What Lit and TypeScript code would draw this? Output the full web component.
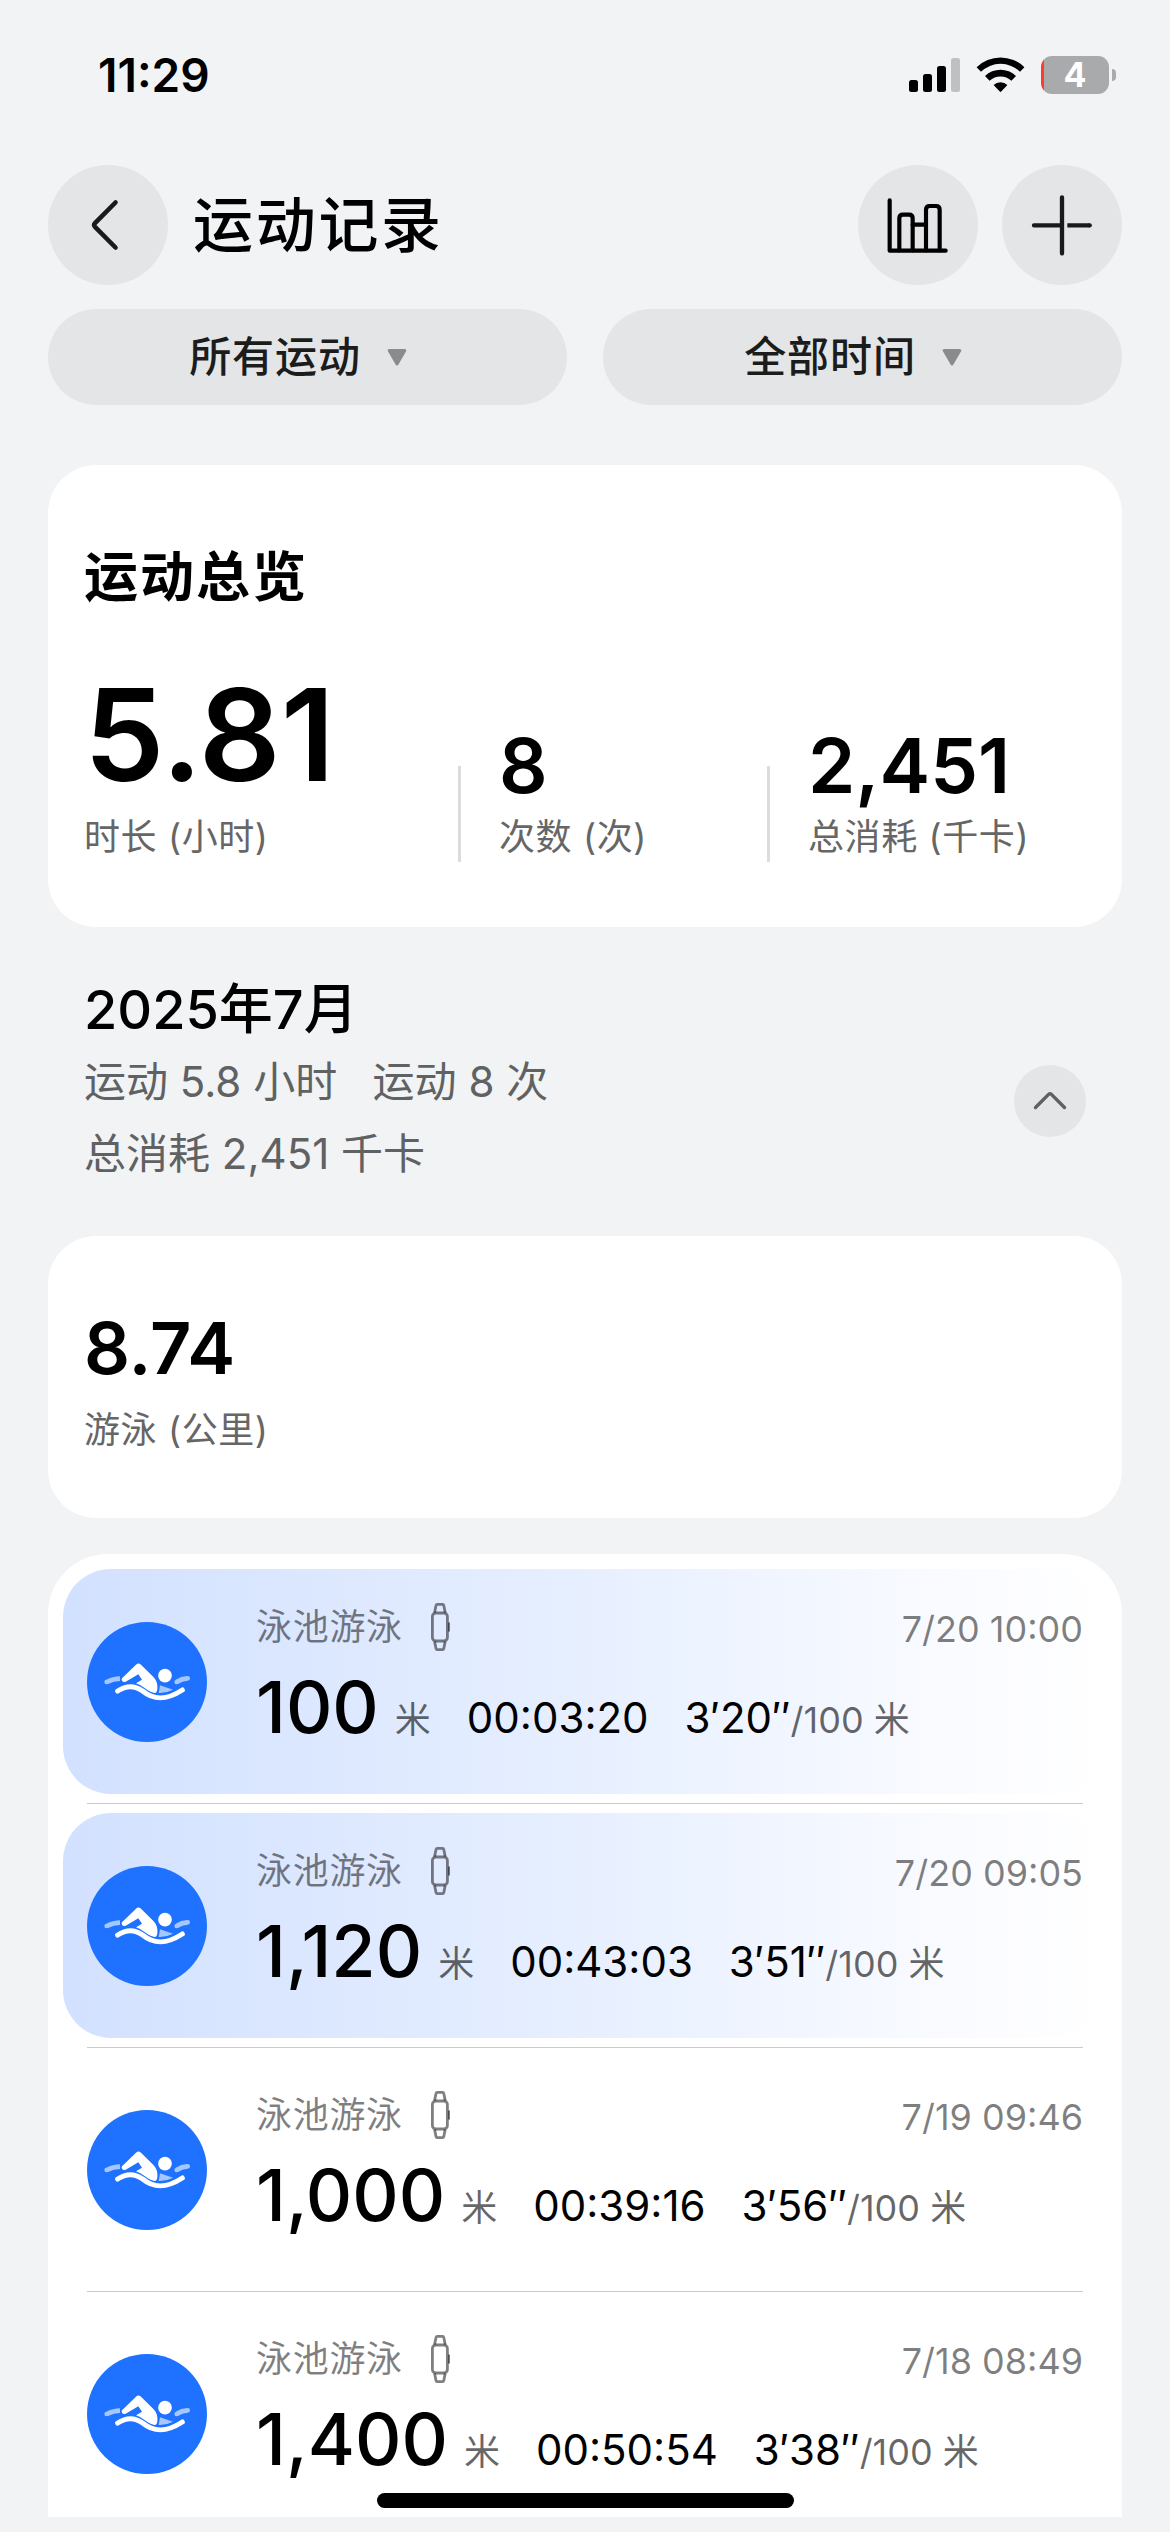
import { LitElement, html, css, svg } from "lit";
import { customElement, property } from "lit/decorators.js";

interface Workout {
  distance: string;
  duration: string;
  pace: string;
  date: string;
  highlighted: boolean;
}

const WORKOUTS: Workout[] = [
  { distance: "100", duration: "00:03:20", pace: "3′20″", date: "7/20 10:00", highlighted: true },
  { distance: "1,120", duration: "00:43:03", pace: "3′51″", date: "7/20 09:05", highlighted: true },
  { distance: "1,000", duration: "00:39:16", pace: "3′56″", date: "7/19 09:46", highlighted: false },
  { distance: "1,400", duration: "00:50:54", pace: "3′38″", date: "7/18 08:49", highlighted: false },
];

@customElement("status-bar")
class StatusBar extends LitElement {
  static styles = css`
    :host {
      display: flex;
      align-items: center;
      justify-content: space-between;
      height: 149px;
      padding: 0 54px 0 98px;
      box-sizing: border-box;
    }
    .time {
      font-size: 46px;
      font-weight: 600;
      line-height: 60px;
    }
    .icons {
      display: flex;
      align-items: center;
    }
    .signal {
      width: 52px;
      height: 36px;
      margin-right: 16px;
    }
    .wifi {
      width: 49px;
      height: 37px;
      margin-right: 16px;
    }
    .battery {
      display: flex;
      align-items: center;
      gap: 3px;
    }
    .cell {
      width: 68px;
      height: 38px;
      border-radius: 11px;
      background: linear-gradient(90deg, #ff3b30 3px, #a9aaac 3px);
      color: #fff;
      font-size: 34px;
      font-weight: 700;
      line-height: 38px;
      text-align: center;
    }
    .nub {
      width: 4px;
      height: 12px;
      border-radius: 0 4px 4px 0;
      background: #a9aaac;
    }
  `;
  render() {
    return html`
      <div class="time">11:29</div>
      <div class="icons">
        <svg class="signal" viewBox="0 0 52 36">
          <rect x="1" y="23" width="9" height="12" rx="2.5" />
          <rect x="15" y="17" width="9" height="18" rx="2.5" />
          <rect x="29" y="9" width="9" height="26" rx="2.5" />
          <rect x="43" y="1" width="9" height="34" rx="2.5" fill="#bfc0c2" />
        </svg>
        <svg class="wifi" viewBox="0 0 49 37">
          <path d="M0.6 11.2 A34 34 0 0 1 48.4 11.2 L44 15.8 A27.8 27.8 0 0 0 5 15.8 Z" />
          <path d="M9 20 A22.2 22.2 0 0 1 40 20 L35.4 24.8 A15.8 15.8 0 0 0 13.6 24.8 Z" />
          <path d="M17.6 28.9 A10 10 0 0 1 31.4 28.9 L25.2 35.6 Q24.5 36.3 23.8 35.6 Z" />
        </svg>
        <div class="battery">
          <div class="cell">4</div>
          <div class="nub"></div>
        </div>
      </div>
    `;
  }
}

@customElement("workout-row")
class WorkoutRow extends LitElement {
  @property({ attribute: false }) workout!: Workout;

  static styles = css`
    :host {
      display: block;
      padding: 9px 15px;
    }
    .panel {
      display: flex;
      align-items: center;
      height: 225px;
      padding: 0 24px;
      border-radius: 48px;
      box-sizing: border-box;
    }
    .lit {
      background: linear-gradient(90deg, #d2e1ff 0%, #e8f0ff 52%, #fbfcff 88%, #ffffff 100%);
    }
    .badge {
      flex: none;
      width: 120px;
      height: 120px;
      margin-right: 49px;
    }
    .info {
      flex: 1;
      display: flex;
      flex-direction: column;
      padding-bottom: 7px;
    }
    .top {
      display: flex;
      align-items: center;
      height: 50px;
      color: rgba(0, 0, 0, 0.5);
      font-size: 36px;
      line-height: 50px;
    }
    .kind {
      letter-spacing: 0.7px;
    }
    .watch {
      width: 22px;
      height: 50px;
      margin-left: 26px;
    }
    .date {
      flex: 1;
      text-align: right;
      padding-top: 4px;
    }
    .stats {
      display: flex;
      align-items: baseline;
      height: 96px;
      line-height: 96px;
      margin-top: 7px;
      white-space: nowrap;
    }
    .distance {
      font-size: 72px;
      font-weight: 500;
    }
    .unit {
      font-size: 36px;
      color: rgba(0, 0, 0, 0.6);
      margin-left: 16px;
    }
    .duration,
    .pace {
      font-size: 42px;
      margin-left: 36px;
    }
    .per {
      font-size: 36px;
      color: rgba(0, 0, 0, 0.6);
    }
  `;
  render() {
    const w = this.workout;
    return html`
      <div class="panel ${w.highlighted ? "lit" : ""}">
        <svg class="badge" viewBox="21 36 360 360">
          <circle cx="201" cy="216" r="180" fill="#1f72ff" />
          <g fill="none" stroke="#a5c7ff" stroke-width="14">
            <path d="M81 216 Q100 206 120 206" />
            <path d="M291 215 Q305 206 322 205" />
            <path d="M80 216 h.1 M290 216 h.1 M323 205 h.1" stroke-linecap="round" />
          </g>
          <path d="M240 226 L279 239 Q258 250 236 249 Z" fill="#a5c7ff" />
          <path
            fill="#fff"
            d="M126 205 L168 164 Q175 157 183 164 L221 202 Q234 216 232 238 Q231 249 224 249 Q213 247 197 236 Q183 225 168 220 L186 209 L175 193 L137 215 Q131 218 127 214 Q123 210 126 205 Z"
          />
          <circle cx="255" cy="197" r="20.5" fill="#fff" />
          <path
            d="M113 243 C140 225 163 225 188 243 C222 271 258 272 307 240"
            fill="none"
            stroke="#fff"
            stroke-width="15"
            stroke-linecap="round"
          />
        </svg>
        <div class="info">
          <div class="top">
            <span class="kind">泳池游泳</span>
            <svg class="watch" viewBox="0 0 22 50" fill="none" stroke="currentColor" stroke-width="2.8">
              <rect x="3.4" y="11" width="15" height="28" rx="3.5" />
              <path d="M5.6 10.6 L7 3.6 Q7.2 2.4 8.4 2.4 H13.4 Q14.6 2.4 14.8 3.6 L16.2 10.6" />
              <path d="M5.6 39.4 L7 46.4 Q7.2 47.6 8.4 47.6 H13.4 Q14.6 47.6 14.8 46.4 L16.2 39.4" />
              <path d="M20 20.5 V29.5" stroke-width="2" />
            </svg>
            <span class="date">${w.date}</span>
          </div>
          <div class="stats">
            <span class="distance">${w.distance}</span>
            <span class="unit">米</span>
            <span class="duration">${w.duration}</span>
            <span class="pace">${w.pace}</span>
            <span class="per">/100 米</span>
          </div>
        </div>
      </div>
    `;
  }
}

@customElement("app-root")
class AppRoot extends LitElement {
  static styles = css`
    :host {
      display: block;
      position: relative;
      width: 1170px;
      height: 2532px;
      overflow: hidden;
      background: #f1f3f5;
      color: #000;
      font-family: "Inter", "Noto Sans CJK SC", sans-serif;
    }
    .header {
      display: flex;
      align-items: center;
      height: 120px;
      margin-top: 16px;
      padding: 0 48px;
    }
    .round {
      width: 120px;
      height: 120px;
      border-radius: 60px;
      background: #e4e5e7;
    }
    .title {
      flex: 1;
      margin: 0 0 0 25px;
      font-size: 60px;
      font-weight: 500;
      line-height: 80px;
      letter-spacing: 2.7px;
    }
    .actions {
      display: flex;
      gap: 24px;
    }
    .filters {
      display: grid;
      grid-template-columns: 1fr 1fr;
      gap: 36px;
      padding: 24px 48px 60px;
    }
    .pill {
      display: flex;
      align-items: center;
      justify-content: center;
      gap: 26px;
      height: 96px;
      padding-right: 19px;
      border-radius: 48px;
      background: #e4e5e7;
      color: #1b1c1c;
      font-size: 42px;
      font-weight: 500;
      line-height: 60px;
      letter-spacing: 0.9px;
    }
    .caret {
      width: 20px;
      height: 17px;
    }
    .card {
      margin: 0 48px;
      border-radius: 48px;
      background: #fff;
      box-sizing: border-box;
    }
    .overview {
      height: 462px;
      padding: 77px 36px 0;
    }
    .card-title {
      margin: 0;
      font-size: 54px;
      font-weight: 700;
      line-height: 72px;
      letter-spacing: 2px;
    }
    .metrics {
      display: grid;
      grid-template-columns: 374px 309px 1fr;
      align-items: end;
      margin-top: 46px;
    }
    .metric {
      position: relative;
    }
    .value {
      font-size: 76px;
      font-weight: 600;
      line-height: 90px;
    }
    .value.big {
      font-size: 128px;
      line-height: 150px;
    }
    .split {
      padding-left: 0;
      margin-left: 38px;
      width: 0;
      white-space: nowrap;
    }
    .metric-row {
      display: flex;
      align-items: flex-end;
    }
    .bar {
      width: 3px;
      height: 96px;
      margin-bottom: 2px;
      background: #dcdcdc;
    }
    .label {
      font-size: 36px;
      line-height: 54px;
      color: #666;
      letter-spacing: 0.6px;
    }
    .month {
      display: flex;
      align-items: center;
      justify-content: space-between;
      height: 309px;
      padding: 0 84px;
      box-sizing: border-box;
    }
    .month-title {
      margin: 0;
      font-size: 54px;
      font-weight: 500;
      line-height: 72px;
    }
    .summary {
      font-size: 42px;
      line-height: 72px;
      color: #606162;
      white-space: pre;
    }
    .toggle {
      width: 72px;
      height: 72px;
      margin-top: 38px;
      border-radius: 36px;
      background: #e4e5e7;
    }
    .distance-card {
      height: 282px;
      padding: 67px 36px 0;
    }
    .distance-card .value {
      font-size: 72px;
    }
    .distance-card .label {
      margin-top: 10px;
    }
    .list {
      height: 963px;
      margin-top: 36px;
      padding-top: 6px;
      border-radius: 60px 60px 0 0;
      overflow: hidden;
    }
    .rule {
      height: 1px;
      margin: 0 39px;
      background: #c9cacb;
    }
    .home {
      position: absolute;
      left: 377px;
      top: 2493px;
      width: 417px;
      height: 15px;
      border-radius: 8px;
      background: #000;
    }
  `;

  private filter(label: string) {
    return html`
      <div class="pill">
        <span>${label}</span>
        <svg class="caret" viewBox="0 0 20 17">
          <path
            d="M2.2 1.5 H17.8 L10 15 Z"
            fill="#8a8b8c"
            stroke="#8a8b8c"
            stroke-width="3"
            stroke-linejoin="round"
          />
        </svg>
      </div>
    `;
  }

  private metric(value: string, label: string) {
    return html`
      <div class="metric-row">
        <div class="bar"></div>
        <div class="split">
          <div class="value">${value}</div>
          <div class="label">${label}</div>
        </div>
      </div>
    `;
  }

  render() {
    return html`
      <status-bar></status-bar>
      <div class="header">
        <svg class="round" viewBox="0 0 120 120">
          <path
            d="M67.5 37.5 L47 58.2 Q45.3 60 47 61.8 L67.5 82.5"
            fill="none"
            stroke="#191a1a"
            stroke-width="4.6"
            stroke-linecap="round"
          />
        </svg>
        <h1 class="title">运动记录</h1>
        <div class="actions">
          <svg class="round" viewBox="54 14 360 360">
            <g fill="none" stroke="#000" stroke-width="12.5" stroke-linecap="round" stroke-linejoin="round">
              <path d="M149 120 V271 H317" />
              <path d="M178 270 V174 Q178 163 189 163 H207 Q218 163 218 174 V270" />
              <path d="M218 193 H258" />
              <path d="M258 270 V148 Q258 137 269 137 H288 Q299 137 299 148 V270" />
            </g>
          </svg>
          <svg class="round" viewBox="486 14 360 360">
            <g fill="none" stroke="#191a1a" stroke-width="13">
              <path d="M666 111 V279 M666 195 H582" stroke-linecap="round" />
              <path d="M749 195 h.1" stroke-linecap="round" />
              <path d="M682 195 H749" />
            </g>
          </svg>
        </div>
      </div>
      <div class="filters">${this.filter("所有运动")}${this.filter("全部时间")}</div>

      <section class="card overview">
        <h2 class="card-title">运动总览</h2>
        <div class="metrics">
          <div>
            <div class="value big">5.81</div>
            <div class="label">时长 (小时)</div>
          </div>
          ${this.metric("8", "次数 (次)")} ${this.metric("2,451", "总消耗 (千卡)")}
        </div>
      </section>

      <div class="month">
        <div>
          <h3 class="month-title">2025年7月</h3>
          <div class="summary">运动 5.8 小时   运动 8 次</div>
          <div class="summary">总消耗 2,451 千卡</div>
        </div>
        <svg class="toggle" viewBox="0 0 72 72">
          <path
            d="M21.5 42.5 L34.6 29.4 Q36 28 37.4 29.4 L50.5 42.5"
            fill="none"
            stroke="#5f6061"
            stroke-width="3.4"
            stroke-linecap="round"
          />
        </svg>
      </div>

      <section class="card distance-card">
        <div class="value">8.74</div>
        <div class="label">游泳 (公里)</div>
      </section>

      <section class="card list">
        ${WORKOUTS.map(
          (w, i) => html`
            ${i > 0 ? html`<div class="rule"></div>` : ""}
            <workout-row .workout=${w}></workout-row>
          `,
        )}
      </section>
      <div class="home"></div>
    `;
  }
}
